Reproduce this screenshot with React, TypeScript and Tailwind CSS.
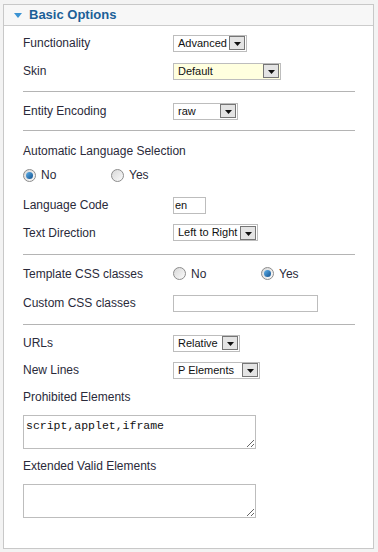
import type { ReactNode } from 'react';

const font = { fontFamily: '"Liberation Sans", Arial, sans-serif' };

function ArrowButton() {
  return (
    <div className="flex h-[14px] w-[16px] shrink-0 items-end justify-center border border-[#767676] bg-[#e4e4e4] pb-[3px]">
      <svg width="7" height="4" viewBox="0 0 7 4">
        <path d="M0 0h7L3.5 4z" fill="#111" />
      </svg>
    </div>
  );
}

function Select({ value, width, yellow }: { value: string; width: string; yellow?: boolean }) {
  return (
    <div
      className={`flex h-[17px] items-center justify-between border border-[#bdbdbd] pl-[4px] pr-[1px] text-[11px] text-[#111] ${width} ${
        yellow ? 'bg-[#ffffdf]' : 'bg-white'
      }`}
    >
      <span>{value}</span>
      <ArrowButton />
    </div>
  );
}

function Radio({ checked }: { checked?: boolean }) {
  return (
    <div className="flex h-[13px] w-[13px] items-center justify-center rounded-full border border-[#8c8c8c] bg-gradient-to-br from-[#d8d8d8] to-[#fbfbfb]">
      {checked && <div className="h-[7px] w-[7px] rounded-full bg-gradient-to-br from-[#5fb2ec] to-[#10528f]" />}
    </div>
  );
}

function RadioPair({ value, gap }: { value: 'No' | 'Yes'; gap: string }) {
  return (
    <div className={`flex items-center ${gap}`}>
      <div className="flex w-[88px] items-center gap-[5px]">
        <Radio checked={value === 'No'} />
        <span>No</span>
      </div>
      <div className="flex items-center gap-[5px]">
        <Radio checked={value === 'Yes'} />
        <span>Yes</span>
      </div>
    </div>
  );
}

function Row({ label, h, children }: { label: string; h: string; children?: ReactNode }) {
  return (
    <div className={`flex items-center ${h}`}>
      <div className="w-[150px] shrink-0">{label}</div>
      {children}
    </div>
  );
}

function Rule({ mt }: { mt: string }) {
  return <div className={`h-px w-[332px] bg-[#b4b4b4] ${mt}`} />;
}

function TextBox({ value }: { value?: string }) {
  return (
    <textarea
      readOnly
      defaultValue={value}
      className="block h-[34px] w-[233px] resize border border-[#bdbdbd] bg-white px-[2px] py-[3px] text-[11.5px] leading-[14px] text-[#111] outline-none"
      style={{ fontFamily: '"Liberation Mono", "Courier New", monospace' }}
    />
  );
}

export default function App() {
  return (
    <div className="h-[552px] w-[378px] bg-[#f3f3f3] pl-[3px] pt-[4px]" style={font}>
      <div className="h-[545px] w-[371px] border border-[#c8c8c8] bg-white">
        <div className="flex h-[21px] items-center border-b border-[#cccccc] bg-[#f7f7f7] pl-[10px]">
          <svg width="8" height="5" viewBox="0 0 8 5" className="mr-[7px]">
            <path d="M0 0h8L4 5z" fill="#3b93d3" />
          </svg>
          <span className="text-[13px] font-bold text-[#1b5f98]">Basic Options</span>
        </div>

        <div className="pl-[19px] pt-[3px] text-[12px] text-[#2a2a3a]">
          <Row label="Functionality" h="h-[28px]">
            <Select value="Advanced" width="w-[74px]" />
          </Row>
          <Row label="Skin" h="h-[28px]">
            <Select value="Default" width="w-[108px]" yellow />
          </Row>
          <Rule mt="mt-[6px]" />

          <Row label="Entity Encoding" h="h-[38px]">
            <Select value="raw" width="w-[65px]" />
          </Row>
          <Rule mt="mt-0" />

          <div className="mt-[6px] flex h-[28px] items-center">Automatic Language Selection</div>
          <div className="flex h-[20px] items-center">
            <RadioPair value="No" gap="" />
          </div>
          <Row label="Language Code" h="h-[28px] mt-[6px]">
            <div className="flex h-[17px] w-[33px] items-center border border-[#bdbdbd] pl-[1px] text-[11px] text-[#111]">
              en
            </div>
          </Row>
          <Row label="Text Direction" h="h-[27px]">
            <Select value="Left to Right" width="w-[85px]" />
          </Row>
          <Rule mt="mt-[8px]" />

          <Row label="Template CSS classes" h="h-[29px] mt-[4px]">
            <RadioPair value="Yes" gap="" />
          </Row>
          <Row label="Custom CSS classes" h="h-[30px]">
            <div className="h-[17px] w-[145px] border border-[#bdbdbd]" />
          </Row>
          <Rule mt="mt-[6px]" />

          <Row label="URLs" h="h-[28px] mt-[4px]">
            <Select value="Relative" width="w-[67px]" />
          </Row>
          <Row label="New Lines" h="h-[26px]">
            <Select value="P Elements" width="w-[87px]" />
          </Row>
          <div className="flex h-[28px] items-center">Prohibited Elements</div>
          <div className="mt-[4px]">
            <TextBox value="script,applet,iframe" />
          </div>
          <div className="flex h-[34px] items-center">Extended Valid Elements</div>
          <div className="mt-px">
            <TextBox />
          </div>
        </div>
      </div>
    </div>
  );
}
